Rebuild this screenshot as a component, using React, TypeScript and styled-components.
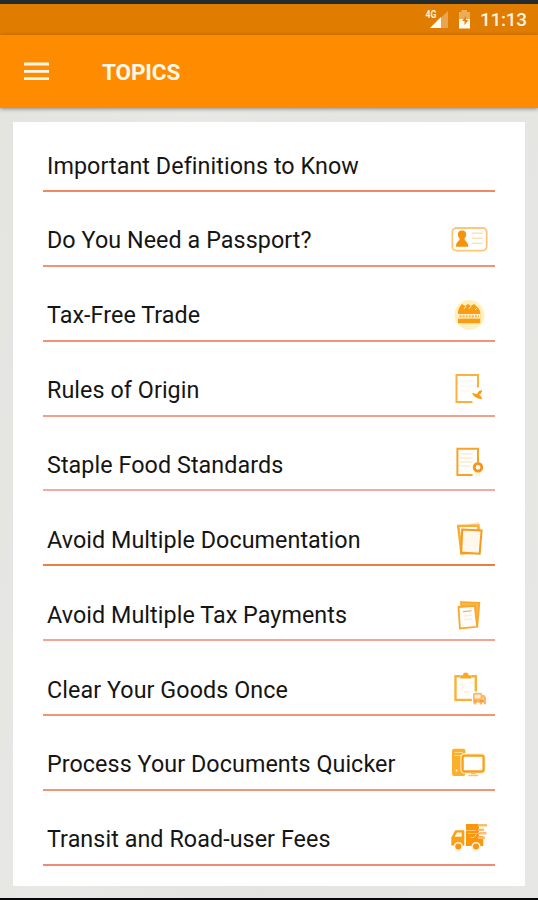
import React from 'react';
import styled, { createGlobalStyle } from 'styled-components';

const GlobalStyle = createGlobalStyle`
  * { box-sizing: border-box; }
  body { margin: 0; font-family: Roboto, sans-serif; background: #e5e6e2; }
`;

const Screen = styled.div`
  width: 538px;
  height: 900px;
  overflow: hidden;
  display: flex;
  flex-direction: column;
  border-top: 4px solid #252c2f;
  border-bottom: 2px solid #080808;
  background: linear-gradient(100deg, #e3e4e0, #e8e9e6 30%, #e4e5e1 60%, #e7e7e5);
`;

const StatusBar = styled.div`
  height: 31px;
  flex: none;
  display: flex;
  align-items: center;
  justify-content: flex-end;
  padding: 0 10px 0 0;
  background: #e07c00;
`;

const Clock = styled.span`
  width: 47px;
  margin-left: 8px;
  margin-right: 1px;
  color: #fff3e0;
  font-size: 19px;
  font-weight: 500;
  line-height: 31px;
  letter-spacing: -0.3px;
  white-space: nowrap;
`;

const AppBar = styled.header`
  height: 73px;
  flex: none;
  display: flex;
  align-items: center;
  padding-left: 24px;
  background: #ff8c00;
  box-shadow: 0 1px 4px rgba(0, 0, 0, 0.4);
`;

const MenuButton = styled.button`
  display: flex;
  padding: 0;
  border: 0;
  background: none;
`;

const Title = styled.h1`
  margin: 1px 0 0 53px;
  color: #fff8ea;
  font-size: 22.5px;
  font-weight: 700;
  letter-spacing: -0.1px;
`;

const Card = styled.ul`
  width: 512px;
  height: 764px;
  flex: none;
  margin: 14px 0 0 13px;
  padding: 0 30px;
  list-style: none;
  background: #fff;
`;

const Row = styled.li<{ $line: string }>`
  height: 74.85px;
  display: flex;
  align-items: flex-end;
  justify-content: space-between;
  padding: 0 5px 4.4px 4px;
  border-bottom: 2px solid ${(p) => p.$line};
  &:first-child { height: 70px; }
`;

const Label = styled.span`
  color: #151515;
  font-size: 23.3px;
  line-height: 40px;
  letter-spacing: 0.07px;
  white-space: nowrap;
`;

const Glyph = styled.svg`
  width: 40px;
  height: 40px;
  flex: none;
  margin-bottom: 0.6px;
  fill: none;
  stroke: #f9a62b;
  stroke-width: 1.8;
`;

const O = '#fa9d12';
const PALE = '#fde3b4';

const Passport = () => (
  <Glyph viewBox="0 0 40 40">
    <rect x="2.3" y="8" width="34.4" height="22.6" rx="4" stroke="#fbc778" />
    <path d="M12 10.5c3.2 0 4.5 2.2 4.1 4.7-.3 1.6-1 2.6-1.6 3.3 0 3 3.8 2.8 3.8 8.3H6c0-5.5 3.6-5.3 3.6-8.3-.6-.7-1.4-1.7-1.7-3.3-.4-2.5.9-4.7 4.1-4.7Z" fill="#f8920c" stroke="none" />
    <path d="M21.7 13.3h11M21.7 18.3h11M21.7 23.3h11" stroke={PALE} strokeWidth="1.5" />
  </Glyph>
);

const Goods = () => (
  <Glyph viewBox="0 0 40 40">
    <circle cx="19.4" cy="20" r="15" fill="#fff0bd" stroke="none" />
    <path d="M8 17.5c0-4 2.5-6.5 4-8.5l3 2 3-2 3 2 3-2c2.5 2 6 5 6.3 8.5v10.8H8Z" fill={O} stroke="none" />
    <path d="m14 14 2-3m3 3 2-3m4 4 2-2" stroke="#ffe3a6" strokeWidth="1" />
    <rect x="8" y="19" width="22.3" height="4.6" fill="#fff0ca" stroke="none" />
    <path d="M9.5 21.3h19.5" stroke="#fbb849" strokeWidth="2.2" strokeDasharray="2 1.1" />
  </Glyph>
);

const Origin = () => (
  <Glyph viewBox="0 0 40 40">
    <path d="M28 17.5V5H6.5v27h16" stroke="#fbb13b" strokeWidth="2" />
    <path d="M10 11h14M10 16h14M10 21h10" stroke="#fffaf0" />
    <path d="M22 23.3c3.4-.6 4.2 1.3 5.2.6 1.2-3.4 2.6-3.4 5-4-.2 2.6-1.4 4.2-3.5 4.8 2 1 3.2 2.2 3.3 4.5-3.7-.3-8.2-2.1-10-5.9Z" fill={O} stroke="none" />
  </Glyph>
);

const Food = () => (
  <Glyph viewBox="0 0 40 40">
    <path d="M28 18V4.8H7.4v26.3h15.2" stroke="#f9a225" strokeWidth="2" />
    <path d="M10.5 10h12M10.5 14h12M10.5 18h12M10.5 22h10" stroke="#fdecc9" strokeWidth="1.3" />
    <path d="M25.7 26v7l2.3-1.5 2.3 1.5v-7Z" fill="#fff0d0" stroke="none" />
    <circle cx="28" cy="23.3" r="3.8" fill="#fff" stroke="#f6941b" strokeWidth="2.8" />
  </Glyph>
);

const Documents = () => (
  <Glyph viewBox="0 0 40 40">
    <path d="m20 6 8-2 2 6" stroke={PALE} />
    <path d="m8.3 7 20-.5.8 27-17.6 1Z" fill="#fff" stroke="#fbad32" strokeWidth="2.6" />
    <path d="m12.2 10.5 19.4.9-2 23.4-18.4-1.2Z" fill="#fff8ec" stroke="#f89a1c" strokeWidth="2" />
  </Glyph>
);

const Tax = () => (
  <Glyph viewBox="0 0 40 40">
    <path d="m11 8 18.4.8-2 23H12Z" fill="#fcb642" stroke="#fba72d" strokeWidth="1.7" />
    <path d="m8.5 13 16.3-1.2 2.3 21-17.2 1.6Z" fill="#fffdf9" stroke="#fba72d" strokeWidth="1.8" />
    <path d="m13 17.7 8.5-.8" stroke="#f5ae70" strokeWidth="1.3" />
    <path d="m13.3 22 9-.9M14 26l8-.8" stroke="#fdebd1" strokeWidth="1.2" />
  </Glyph>
);

const Clear = () => (
  <Glyph viewBox="0 0 40 40">
    <path d="M10 7.2H5.5v23.7h16.3M21.5 7.2h4.3v15.2" stroke="#fab233" strokeWidth="2.4" />
    <path d="M10.2 9.5V6.3h2.7a2.9 2.9 0 0 1 5.8 0h2.8v3.2Z" fill="#f9aa25" stroke="none" />
    <path d="m11 14 3 3-3 4M14 23h6" stroke="#fff2dc" />
    <path d="M23 33.5v-7.7q0-2 2-2h5.2q2 0 2 2l2 .2q1.8 1 1.8 3.5v5.8h-2v-1.5h-2v1.8h-2v-1.8h-3.5v1.8h-2Z" fill="#fbb765" stroke="none" />
    <path d="M25 26h5.2v3H25ZM33 28v3" fill="#fff1db" stroke="#fff1db" strokeWidth=".7" />
    <path d="M24.5 32h2m3 0h4" stroke="#f78f2b" strokeWidth="1.6" />
  </Glyph>
);

const Computer = () => (
  <Glyph viewBox="0 0 40 40">
    <rect x="2" y="4.8" width="13.5" height="27.2" rx="2.3" fill="#fbb02b" stroke="none" />
    <path d="M4.7 8.5h8M4.7 11.5h8" stroke="#ffdc91" strokeWidth="1" />
    <circle cx="6.6" cy="26.6" r="1" fill="#fff" stroke="none" />
    <rect x="12.6" y="11.3" width="21" height="16.2" rx="2" fill="#fff" stroke="#fff2cf" strokeWidth="4.4" />
    <rect x="12.6" y="11.7" width="21" height="15.8" rx="2" fill="#fff" stroke="#f9a018" strokeWidth="2.3" />
    <path d="M18.5 31.4h9.8M21 29.6h4.8" stroke="#fbc16e" strokeWidth="1.5" />
  </Glyph>
);

const Truck = () => (
  <Glyph viewBox="0 0 40 40">
    <path d="M1.3 26.6v-8.1l4-7.3h9v15.6Z" fill="#fba015" stroke="none" />
    <path d="M4.5 17.7 7 13.5h4.7v4.2Z" fill="#fff5df" stroke="none" />
    <path d="M16 5h13v22H16ZM28 17h5.3v10H28Z" fill="#fc960c" stroke="none" />
    <path d="M28 6.2h9M28 10.7h6M28 14.3h8.5M28 18.7h7" stroke="#fbbd72" strokeWidth="2.6" />
    <path d="M16 11.5h10M18 14.5h9l-3 4h-4" stroke="#ffd18d" strokeWidth=".8" />
    <circle cx="8.3" cy="27.5" r="3.8" fill="#fa9411" stroke="#fff4df" strokeWidth="1.6" />
    <circle cx="26" cy="27.5" r="3.8" fill="#fa9411" stroke="#fff4df" strokeWidth="1.6" />
  </Glyph>
);

const topics: { label: string; line: string; Icon?: React.FC }[] = [
  { label: 'Important Definitions to Know', line: '#ef8863' },
  { label: 'Do You Need a Passport?', line: '#f09478', Icon: Passport },
  { label: 'Tax-Free Trade', line: '#f09478', Icon: Goods },
  { label: 'Rules of Origin', line: '#f0a08d', Icon: Origin },
  { label: 'Staple Food Standards', line: '#f3aaa0', Icon: Food },
  { label: 'Avoid Multiple Documentation', line: '#ea803f', Icon: Documents },
  { label: 'Avoid Multiple Tax Payments', line: '#f3a594', Icon: Tax },
  { label: 'Clear Your Goods Once', line: '#f09673', Icon: Clear },
  { label: 'Process Your Documents Quicker', line: '#f09673', Icon: Computer },
  { label: 'Transit and Road-user Fees', line: '#ed8b7b', Icon: Truck },
];

const StatusIcons = () => (
  <svg width="48" height="23" viewBox="0 0 48 23">
    <path d="M24 3v17H6Z" fill="#e9a44e" />
    <path d="M17 9v11H6Z" fill="#fffaf0" />
    <text x="1.5" y="10" fill="#ffefd7" fontFamily="Roboto, sans-serif" fontSize="10" fontWeight="700" textLength="11" lengthAdjust="spacingAndGlyphs">4G</text>
    <path d="M35 4h2.5V2H43v2h3v8H35Z" fill="#edac57" />
    <path d="M35 11h11v9.5H35Z" fill="#fffaf0" />
    <path d="m42 8-4 5h2.5v4l4-5H42Z" fill="#df851a" />
  </svg>
);

export default function App() {
  return (
    <>
      <GlobalStyle />
      <Screen>
        <StatusBar>
          <StatusIcons />
          <Clock>11:13</Clock>
        </StatusBar>
        <AppBar>
          <MenuButton aria-label="Menu">
            <svg width="25" height="19" viewBox="0 0 25 19">
              <path d="M0 2h25M0 9.3h25M0 16.6h25" stroke="#fff8ea" strokeWidth="2.8" />
            </svg>
          </MenuButton>
          <Title>TOPICS</Title>
        </AppBar>
        <Card>
          {topics.map(({ label, line, Icon }) => (
            <Row key={label} $line={line}>
              <Label>{label}</Label>
              {Icon && <Icon />}
            </Row>
          ))}
        </Card>
      </Screen>
    </>
  );
}
